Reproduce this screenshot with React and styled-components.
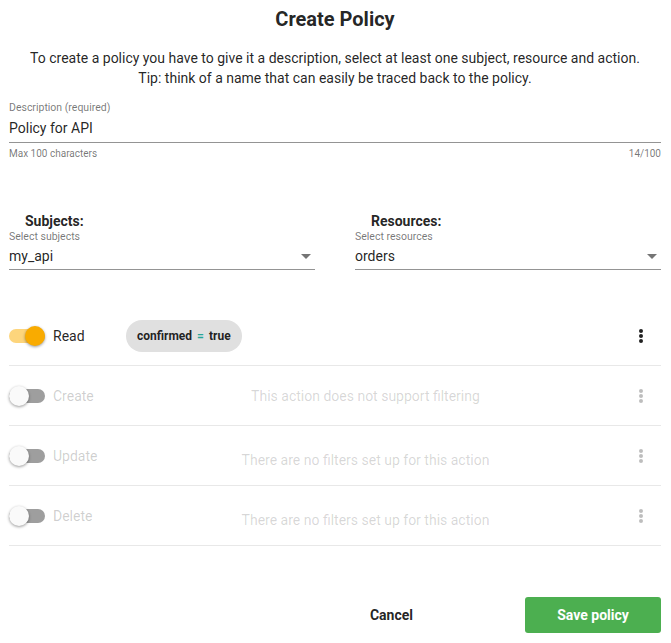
import styled, { createGlobalStyle } from 'styled-components'

const Global = createGlobalStyle`
  body {
    margin: 0;
    font-family: Roboto, "Liberation Sans", sans-serif;
    color: rgba(0, 0, 0, 0.87);
    background: #fff;
  }
`

const actions = [
  { name: 'Read', on: true, filter: true },
  { name: 'Create', message: 'This action does not support filtering', offset: 0 },
  { name: 'Update', message: 'There are no filters set up for this action', offset: 8 },
  { name: 'Delete', message: 'There are no filters set up for this action', offset: 8 },
]

export default function App() {
  return (
    <>
      <Global />
      <Page>
        <Title>Create Policy</Title>
        <Intro>
          To create a policy you have to give it a description, select at least one subject, resource and action.
          <br />
          Tip: think of a name that can easily be traced back to the policy.
        </Intro>

        <Field>
          <FieldLabel>Description (required)</FieldLabel>
          <InputValue>Policy for API</InputValue>
        </Field>
        <Helper>
          <span>Max 100 characters</span>
          <span>14/100</span>
        </Helper>

        <Selects>
          <SelectGroup>
            <GroupTitle>Subjects:</GroupTitle>
            <Field>
              <FieldLabel>Select subjects</FieldLabel>
              <SelectValue>
                my_api
                <Arrow />
              </SelectValue>
            </Field>
          </SelectGroup>
          <SelectGroup>
            <GroupTitle>Resources:</GroupTitle>
            <Field>
              <FieldLabel>Select resources</FieldLabel>
              <SelectValue>
                orders
                <Arrow />
              </SelectValue>
            </Field>
          </SelectGroup>
        </Selects>

        <ActionList>
          {actions.map((a) => (
            <ActionRow key={a.name}>
              <Toggle $on={a.on}>
                <Thumb $on={a.on} />
              </Toggle>
              <ActionName $disabled={!a.on}>{a.name}</ActionName>
              <ActionBody>
                {a.filter ? (
                  <Chip>
                    confirmed <Eq>=</Eq> true
                  </Chip>
                ) : (
                  <Message style={{ paddingTop: a.offset }}>{a.message}</Message>
                )}
              </ActionBody>
              <Kebab $disabled={!a.on}>
                <svg width="4" height="14" viewBox="0 0 4 14">
                  <circle cx="2" cy="2" r="2" />
                  <circle cx="2" cy="7" r="2" />
                  <circle cx="2" cy="12" r="2" />
                </svg>
              </Kebab>
            </ActionRow>
          ))}
        </ActionList>

        <Footer>
          <TextButton>Cancel</TextButton>
          <SaveButton>Save policy</SaveButton>
        </Footer>
      </Page>
    </>
  )
}

function Arrow() {
  return (
    <ArrowIcon width="10" height="5" viewBox="0 0 10 5">
      <path d="M0 0 L10 0 L5 5 Z" />
    </ArrowIcon>
  )
}

const Page = styled.div`
  width: 652px;
  padding: 7px 10px 10px 9px;
`

const Title = styled.h1`
  margin: 0;
  text-align: center;
  font-size: 20px;
  font-weight: 700;
  line-height: 24px;
`

const Intro = styled.p`
  margin: 17px 0 0;
  text-align: center;
  font-size: 14px;
  line-height: 20px;
`

const Field = styled.div`
  margin-top: 14px;
  border-bottom: 1px solid rgba(0, 0, 0, 0.42);
  padding-bottom: 4px;
`

const FieldLabel = styled.div`
  font-size: 10.5px;
  line-height: 12px;
  color: rgba(0, 0, 0, 0.54);
`

const InputValue = styled.div`
  margin-top: 4px;
  font-size: 14px;
  line-height: 20px;
`

const Helper = styled.div`
  display: flex;
  justify-content: space-between;
  margin-top: 5px;
  font-size: 10px;
  line-height: 12px;
  color: rgba(0, 0, 0, 0.54);
`

const Selects = styled.div`
  display: grid;
  grid-template-columns: 306px 306px;
  column-gap: 40px;
  margin-top: 52px;
`

const SelectGroup = styled.div`
  & > ${Field} {
    margin-top: 1px;
    padding-bottom: 3px;
  }
`

const GroupTitle = styled.div`
  padding-left: 16px;
  font-size: 14px;
  font-weight: 700;
  line-height: 18px;
`

const SelectValue = styled.div`
  display: flex;
  align-items: center;
  justify-content: space-between;
  margin-top: 3px;
  font-size: 14px;
  line-height: 20px;
`

const ArrowIcon = styled.svg`
  fill: rgba(0, 0, 0, 0.54);
  margin-right: 4px;
`

const ActionList = styled.div`
  margin-top: 36px;
`

const ActionRow = styled.div`
  box-sizing: border-box;
  display: flex;
  align-items: center;
  height: 60px;
  border-bottom: 1px solid #e8e8e8;
`

const Toggle = styled.div`
  position: relative;
  width: 36px;
  height: 14px;
  border-radius: 7px;
  background: ${(p) => (p.$on ? '#fdd57c' : '#9e9e9e')};
  flex-shrink: 0;
`

const Thumb = styled.div`
  position: absolute;
  top: -3px;
  left: ${(p) => (p.$on ? '16px' : '0')};
  width: 20px;
  height: 20px;
  border-radius: 50%;
  background: ${(p) => (p.$on ? '#f9ab00' : '#fafafa')};
  box-shadow: 0 1px 3px rgba(0, 0, 0, 0.4);
`

const ActionName = styled.div`
  width: 73px;
  margin-left: 8px;
  font-size: 14px;
  color: ${(p) => (p.$disabled ? 'rgba(0, 0, 0, 0.2)' : 'rgba(0, 0, 0, 0.87)')};
`

const ActionBody = styled.div`
  flex: 1;
  display: flex;
  align-items: center;
`

const Chip = styled.div`
  display: inline-flex;
  align-items: center;
  gap: 3px;
  height: 32px;
  padding: 0 11px;
  border-radius: 16px;
  background: #e0e0e0;
  font-size: 12px;
  font-weight: 700;
  color: rgba(0, 0, 0, 0.87);
`

const Eq = styled.span`
  color: #26a69a;
  padding: 0 2px;
`

const Message = styled.div`
  flex: 1;
  text-align: center;
  margin-left: -26px;
  font-size: 14px;
  color: rgba(0, 0, 0, 0.17);
`

const Kebab = styled.div`
  width: 20px;
  display: flex;
  justify-content: center;
  margin-right: 10px;
  fill: ${(p) => (p.$disabled ? 'rgba(0, 0, 0, 0.26)' : 'rgba(0, 0, 0, 0.87)')};
`

const Footer = styled.div`
  display: flex;
  justify-content: flex-end;
  align-items: center;
  gap: 96px;
  margin-top: 51px;
`

const TextButton = styled.button`
  border: none;
  background: transparent;
  font-family: inherit;
  font-size: 14px;
  font-weight: 700;
  color: rgba(0, 0, 0, 0.87);
  padding: 0 16px;
  height: 36px;
`

const SaveButton = styled.button`
  border: none;
  border-radius: 3px;
  background: #4caf50;
  color: #fff;
  font-family: inherit;
  font-size: 14px;
  font-weight: 700;
  width: 136px;
  height: 36px;
`
